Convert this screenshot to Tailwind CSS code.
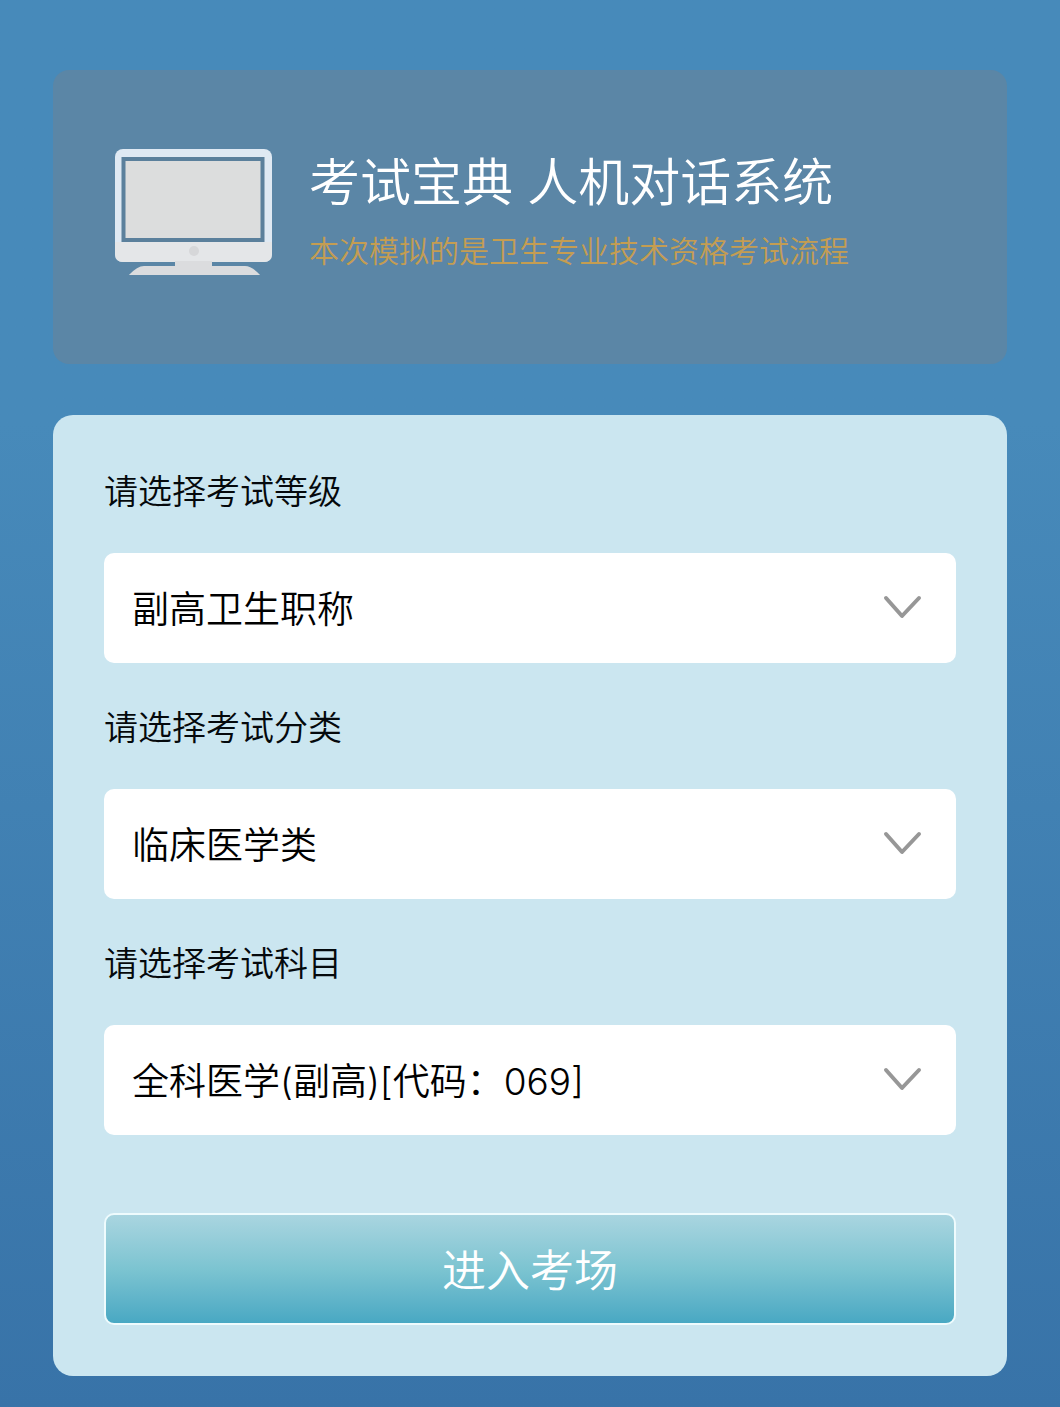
<!DOCTYPE html>
<html lang="zh-CN">
<head>
    <meta charset="UTF-8">
    <meta name="viewport" content="width=device-width, initial-scale=1.0">
    <title>考试宝典 人机对话系统</title>
    <script src="https://cdn.jsdelivr.net/npm/@tailwindcss/browser@4"></script>
</head>
<body class="min-h-screen bg-linear-to-b from-[#478aba] from-30% to-[#3873a8] px-[5%] pt-[70px] pb-8 font-[Inter,'Noto_Sans_CJK_SC',sans-serif] font-[350]">
<header class="flex items-start gap-9 rounded-2xl bg-[#5b86a6] pt-[79px] pr-8 pb-[89px] pl-[62px]">
    <svg class="h-[126px] w-[158px] shrink-0" viewBox="0 0 158 126" aria-hidden="true">
        <path d="M29 117H130Q137 117 146 127H13Q22 117 29 117Z" fill="#dbdcde"/>
        <rect x="0" y="0" width="157" height="113" rx="8" fill="#dfe9f3"/>
        <path d="M0 93H157V105Q157 113 149 113H8Q0 113 0 105Z" fill="#e4e6e8"/>
        <rect x="60" y="112" width="37" height="9" fill="#dbdcde"/>
        <rect x="8.500" y="10" width="139" height="81" fill="#dcdddd" stroke="#5b809c" stroke-width="4"/>
        <circle cx="79" cy="102" r="5" fill="#d6d7d9"/>
    </svg>
    <div>
        <h1 class="text-[51px] leading-[68px] text-white">考试宝典 人机对话系统</h1>
        <p class="mt-[14px] text-[30px] leading-10 text-[#c49d52]">本次模拟的是卫生专业技术资格考试流程</p>
    </div>
</header>

<form class="mt-[51px] rounded-[20px] bg-[#cbe6f0] px-[51px] pt-[52px] pb-[51px]">
    <div>
        <label for="level" class="block text-[34px] leading-[50px] text-[#05090c]">请选择考试等级</label>
        <div class="relative mt-9">
            <select id="level" class="block h-[110px] w-full appearance-none rounded-[10px] bg-white pt-1 pr-24 pl-7 text-[37px] text-black">
                <option>副高卫生职称</option>
            </select>
            <svg class="pointer-events-none absolute top-[42px] right-[34px] h-6 w-10" viewBox="0 0 40 24" fill="none" stroke="#979797" stroke-width="4" stroke-linecap="round" stroke-linejoin="round" aria-hidden="true"><path d="M4 3L20 21L37 3"/></svg>
        </div>
    </div>
    <div class="mt-10">
        <label for="category" class="block text-[34px] leading-[50px] text-[#05090c]">请选择考试分类</label>
        <div class="relative mt-9">
            <select id="category" class="block h-[110px] w-full appearance-none rounded-[10px] bg-white pt-1 pr-24 pl-7 text-[37px] text-black">
                <option>临床医学类</option>
            </select>
            <svg class="pointer-events-none absolute top-[42px] right-[34px] h-6 w-10" viewBox="0 0 40 24" fill="none" stroke="#979797" stroke-width="4" stroke-linecap="round" stroke-linejoin="round" aria-hidden="true"><path d="M4 3L20 21L37 3"/></svg>
        </div>
    </div>
    <div class="mt-10">
        <label for="subject" class="block text-[34px] leading-[50px] text-[#05090c]">请选择考试科目</label>
        <div class="relative mt-9">
            <select id="subject" class="block h-[110px] w-full appearance-none rounded-[10px] bg-white pt-1 pr-24 pl-7 text-[37px] text-black">
                <option>全科医学(副高)[代码：069]</option>
            </select>
            <svg class="pointer-events-none absolute top-[42px] right-[34px] h-6 w-10" viewBox="0 0 40 24" fill="none" stroke="#979797" stroke-width="4" stroke-linecap="round" stroke-linejoin="round" aria-hidden="true"><path d="M4 3L20 21L37 3"/></svg>
        </div>
    </div>
    <button type="button" class="mt-[78px] block h-28 w-full rounded-[10px] border-2 border-[#eefbfd] bg-linear-to-b from-[#a9d5e0] via-[#7cc4d1] via-50% to-[#48a8c3] pt-1 text-[44px] text-white">进入考场</button>
</form>
</body>
</html>
